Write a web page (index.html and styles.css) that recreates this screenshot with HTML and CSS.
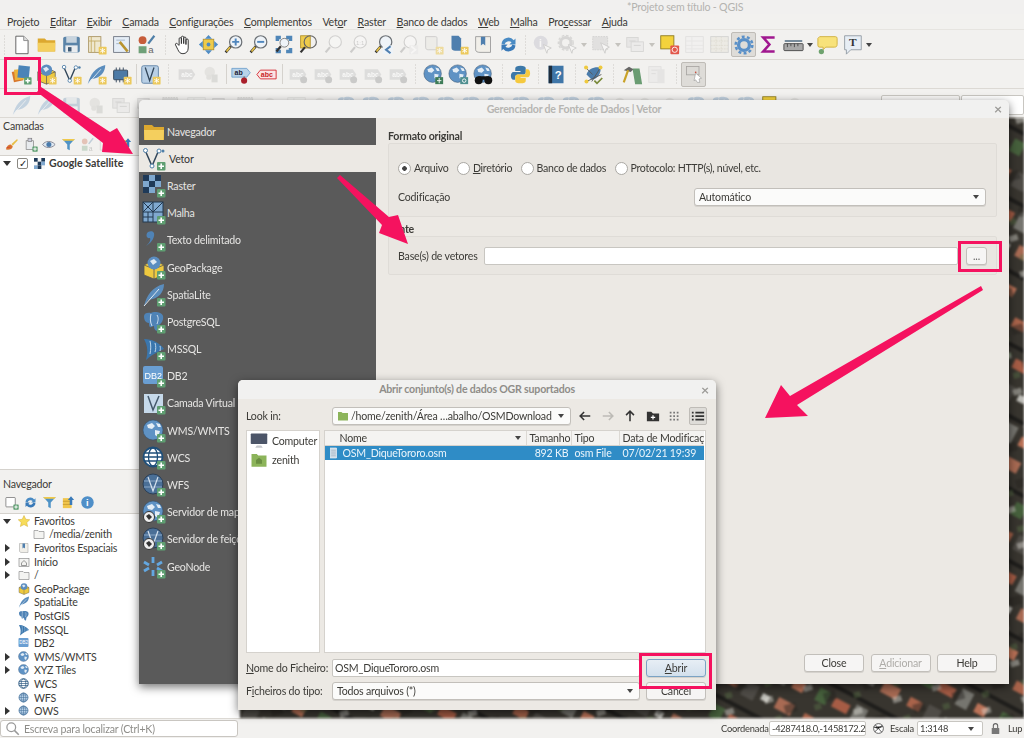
FILE: index.html
```html
<!DOCTYPE html>
<html lang="pt">
<head>
<meta charset="utf-8">
<title>*Projeto sem título - QGIS</title>
<link rel="stylesheet" href="styles.css">
</head>
<body>
<svg class="sprite" xmlns="http://www.w3.org/2000/svg">
  <symbol id="bp" viewBox="0 0 24 24"><rect x="15" y="15" width="8.5" height="8.5" rx="1" fill="#5f9f72"/><path d="M19.2 16.5v5.5M16.5 19.2h5.5" stroke="#fff" stroke-width="1.6"/></symbol>
  <symbol id="by" viewBox="0 0 24 24"><rect x="14.5" y="14.5" width="9" height="9" rx="1" fill="#ecc95c"/><path d="M19 16v6M16.3 17.5l5.4 3M21.7 17.5l-5.4 3" stroke="#fff" stroke-width="1"/></symbol>
  <symbol id="mag" viewBox="0 0 24 24"><path d="M9 14L3 21" stroke="#333" stroke-width="3"/><path d="M8 15L4 20" stroke="#e3bf45" stroke-width="2"/><circle cx="14.5" cy="9" r="7" fill="#eef3f8" stroke="#6b7075" stroke-width="1.4"/></symbol>
  <symbol id="new" viewBox="0 0 24 24"><path d="M5.5 2.5h9l5 5v15h-14z" fill="#fff" stroke="#555"/><path d="M14.5 2.5v5h5" fill="#ddd" stroke="#888"/></symbol>
  <symbol id="open" viewBox="0 0 24 24"><path d="M2 5h8l2 2h10v13H2z" fill="#dca82f"/><path d="M2 10h20l-.5 10h-19z" fill="#f4cf5e"/></symbol>
  <symbol id="save" viewBox="0 0 24 24"><rect x="2.500" y="3" width="19" height="18" rx="2" fill="#5b84a8"/><rect x="6" y="3" width="12" height="7" fill="#c8d4de"/><rect x="5" y="13" width="14" height="8" fill="#e9ecef"/><rect x="8" y="15" width="4" height="5" fill="#3f5a74"/></symbol>
  <symbol id="lay" viewBox="0 0 24 24"><rect x="3" y="3" width="14" height="18" fill="#efe8cf" stroke="#a99463"/><path d="M6 3v18M3 8h14M10 8v13" stroke="#c5ab63"/><use href="#by"/></symbol>
  <symbol id="mgr" viewBox="0 0 24 24"><rect x="3" y="3" width="18" height="18" fill="#e5edf6" stroke="#6d7480"/><path d="M6 7h10M6 11h7" stroke="#9fb1c4"/><path d="M10 9l9 11" stroke="#b8932e" stroke-width="3"/></symbol>
  <symbol id="sty" viewBox="0 0 24 24"><circle cx="7.500" cy="7" r="4.500" fill="#c65c3a"/><rect x="3" y="14" width="9" height="8" fill="#6fa078"/><path d="M14 11L21 2" stroke="#4f7fa8" stroke-width="2.500"/><text x="14" y="22" class="svgt" font-size="11" fill="#666">a</text></symbol>
  <symbol id="hand" viewBox="0 0 24 24"><path d="M7 13V5.500a1.300 1.300 0 0 1 2.600 0V11V3.800a1.300 1.300 0 0 1 2.600 0V11V4.800a1.300 1.300 0 0 1 2.600 0V12V7a1.300 1.300 0 0 1 2.600 0v9c0 4-2.500 6.500-6 6.500-3.500 0-4.600-2-6-5l-2.500-5c-.7-1.500 1-2.500 2-1.300z" fill="#fff" stroke="#333" stroke-width="1.100"/></symbol>
  <symbol id="pan" viewBox="0 0 24 24"><rect x="6" y="6" width="12" height="12" fill="#eecb4a" stroke="#b1922e"/><path d="M12 1l4 4.500H8zM12 23l4-4.500H8zM1 12l4.500-4v8zM23 12l-4.500-4v8z" fill="#4f8cc4"/><circle cx="12" cy="12" r="2.200" fill="#4f8cc4"/></symbol>
  <symbol id="zin" viewBox="0 0 24 24"><use href="#mag"/><path d="M14.500 5v8M10.500 9h8" stroke="#4f86bd" stroke-width="2.200"/></symbol>
  <symbol id="zout" viewBox="0 0 24 24"><use href="#mag"/><path d="M10.500 9h8" stroke="#4f86bd" stroke-width="2.200"/></symbol>
  <symbol id="zfull" viewBox="0 0 24 24"><path d="M3 2h6v4H7v2H3zM15 2h7v6h-4V6h-3zM3 16h4v2h2v4H3zM18 16h4v6h-7v-4h3z" fill="#4f86b8"/><path d="M9 14L4 20" stroke="#333" stroke-width="2.500"/><circle cx="13" cy="10" r="5" fill="#eef3f8" stroke="#777"/></symbol>
  <symbol id="zlay" viewBox="0 0 24 24"><rect x="3" y="2" width="11" height="14" fill="#eecb4a" stroke="#b1922e"/><path d="M8 15L3 21" stroke="#333" stroke-width="2.500"/><circle cx="14" cy="9" r="7" fill="none" stroke="#666" stroke-width="1.300"/></symbol>
  <symbol id="zgen" viewBox="0 0 24 24"><path d="M8 15L3 21" stroke="#777" stroke-width="2.500"/><circle cx="14" cy="9" r="7" fill="#fff" stroke="#888" stroke-width="1.300"/></symbol>
  <symbol id="z11" viewBox="0 0 24 24"><use href="#zgen"/><text x="9" y="12" class="svgt" font-size="7" fill="#777">1:1</text></symbol>
  <symbol id="zlast" viewBox="0 0 24 24"><use href="#mag"/><rect x="11" y="13" width="12" height="10" fill="#eef3f8"/><path d="M20 14l-5 4 5 4" fill="none" stroke="#4f7fb0" stroke-width="2.500"/></symbol>
  <symbol id="znext" viewBox="0 0 24 24"><use href="#zgen"/><rect x="13" y="13" width="10" height="10" fill="#ddd"/><path d="M15 14l5 4-5 4" fill="none" stroke="#fff" stroke-width="2"/></symbol>
  <symbol id="bknew" viewBox="0 0 24 24"><path d="M3 3h11c2 0 2 1 2 2v13H6c-2 0-3-1-3-3z" fill="#e9e7e2" stroke="#aaa"/><use href="#by"/></symbol>
  <symbol id="bkblue" viewBox="0 0 24 24"><path d="M4 2h8l3 3v14H8c-2 0-4-1-4-3z" fill="#4f7fae"/><use href="#by"/></symbol>
  <symbol id="bkview" viewBox="0 0 24 24"><path d="M3 3h17v18H8c-3 0-5-1-5-3z" fill="#f1efe9" stroke="#999"/><path d="M9 3h5v10l-2.500-2-2.500 2z" fill="#4f7fae"/></symbol>
  <symbol id="ref" viewBox="0 0 24 24"><path d="M4 11a8 8 0 0 1 14-4l2-2v7h-7l2.500-2.500A5 5 0 0 0 7.500 12z" fill="#4a8bc4"/><path d="M20 13a8 8 0 0 1-14 4l-2 2v-7h7l-2.500 2.500a5 5 0 0 0 8-2.500z" fill="#3a7ab8"/></symbol>
  <symbol id="ident" viewBox="0 0 24 24"><circle cx="10" cy="10" r="8" fill="#aab"/><text x="8" y="15" class="svgt" font-size="12" font-weight="700" fill="#fff">i</text><path d="M13 12l9 4-4 2-1 4z" fill="#fff" stroke="#777"/></symbol>
  <symbol id="gear" viewBox="0 0 24 24"><circle cx="10" cy="10" r="6" fill="none" stroke="#999" stroke-width="3.500"/><circle cx="10" cy="10" r="8.500" fill="none" stroke="#999" stroke-width="1.500" stroke-dasharray="3 2"/><path d="M13 12l9 4-4 2-1 4z" fill="#fff" stroke="#777"/></symbol>
  <symbol id="sel" viewBox="0 0 24 24"><rect x="2" y="3" width="17" height="15" fill="#bbb" stroke="#888" stroke-dasharray="2 1"/><path d="M11 10l10 5-4 2-1 5z" fill="#fff" stroke="#777"/></symbol>
  <symbol id="attr" viewBox="0 0 24 24"><rect x="2" y="4" width="13" height="11" fill="#ccc" stroke="#999"/><rect x="7" y="9" width="14" height="11" fill="#ddd" stroke="#999"/><path d="M5 8h7M10 13h8" stroke="#888"/></symbol>
  <symbol id="dsel" viewBox="0 0 24 24"><rect x="2" y="2" width="15" height="15" fill="#f3d23c" stroke="#8d7a1f"/><rect x="13" y="13" width="10" height="10" rx="1" fill="#e2574a"/><circle cx="18" cy="18" r="3" fill="none" stroke="#fff"/></symbol>
  <symbol id="tab" viewBox="0 0 24 24"><rect x="2" y="3" width="20" height="18" fill="#eee" stroke="#bbb"/><path d="M2 8h20M2 13h20M2 17h20M9 3v18" stroke="#ccc"/></symbol>
  <symbol id="cal" viewBox="0 0 24 24"><rect x="2" y="3" width="20" height="18" fill="#e7e4db" stroke="#bbb"/><path d="M2 8h20M2 13h20M2 17h20M8 3v18M14 3v18" stroke="#cfc9b9" stroke-dasharray="2 1"/></symbol>
  <symbol id="cog" viewBox="0 0 24 24"><circle cx="12" cy="12" r="6.500" fill="none" stroke="#5a90c8" stroke-width="4"/><circle cx="12" cy="12" r="10" fill="none" stroke="#5a90c8" stroke-width="3" stroke-dasharray="3.500 2.800"/></symbol>
  <symbol id="sig" viewBox="0 0 24 24"><path d="M19 4H6l7 8-7 8h13" fill="none" stroke="#a0178f" stroke-width="3"/></symbol>
  <symbol id="rul" viewBox="0 0 24 24"><path d="M2 8h20" stroke="#36566e" stroke-width="1.500"/><rect x="1" y="11" width="22" height="8" rx="1" fill="#a9a9a9" stroke="#444"/><path d="M5 11v4M9 11v3M13 11v4M17 11v3" stroke="#444"/></symbol>
  <symbol id="tip" viewBox="0 0 24 24"><path d="M3 3h18a2 2 0 0 1 2 2v7c0 2-1 3-3 3H10l-3 3V15H3a2 2 0 0 1-2-2V5z" fill="#f8e27a" stroke="#cfae3a"/><circle cx="5" cy="20" r="3" fill="#6ea26e"/></symbol>
  <symbol id="ttxt" viewBox="0 0 24 24"><path d="M3 2h19v16H10l-5 5v-5H3z" fill="#e7eef5" stroke="#8f98a0"/><text x="8" y="14" class="svgs" font-size="13" fill="#333">T</text></symbol>
  <symbol id="dsm" viewBox="0 0 24 24"><rect x="2" y="8" width="11" height="12" fill="#d8772c" transform="rotate(-12 7 14)"/><rect x="4" y="6" width="12" height="12" fill="#edb33a" transform="rotate(-6 10 12)"/><rect x="8" y="2" width="13" height="14" fill="#4b84b8" transform="rotate(6 14 9)"/><use href="#bp"/></symbol>
  <symbol id="gpkg" viewBox="0 0 24 24"><path d="M2 9l10-5 10 5v10l-10 4-10-4z" fill="#eec93f" stroke="#555" stroke-width=".8"/><path d="M2 9l10 4 10-4M12 13v10" fill="none" stroke="#555" stroke-width=".8"/><circle cx="12" cy="7" r="6.500" fill="#5b8dc0"/><path d="M8 5l4-2 3 3-4 3z" fill="#dfe9f2"/></symbol>
  <symbol id="gpkgp" viewBox="0 0 24 24"><use href="#gpkg"/><use href="#bp"/></symbol>
  <symbol id="gpkgy" viewBox="0 0 24 24"><use href="#gpkg"/><use href="#by"/></symbol>
  <symbol id="vec" viewBox="0 0 24 24"><path d="M3 3l7 16 6-14" fill="none" stroke="#33475a" stroke-width="1.500"/><circle cx="3.500" cy="3.500" r="2" fill="#fff" stroke="#4f7fa8"/><circle cx="10" cy="19" r="2" fill="#fff" stroke="#4f7fa8"/><circle cx="17" cy="4" r="2" fill="#fff" stroke="#4f7fa8"/><circle cx="21" cy="4" r="1.500" fill="#4f7fa8"/></symbol>
  <symbol id="vecp" viewBox="0 0 24 24"><use href="#vec"/><use href="#bp"/></symbol>
  <symbol id="vecy" viewBox="0 0 24 24"><use href="#vec"/><use href="#by"/></symbol>
  <symbol id="fea" viewBox="0 0 24 24"><path d="M2 23C5 12 10 4 22 1c0 8-5 15-16 16z" fill="#5b8dbd"/><path d="M2 23L17 6" stroke="#dfe9f2"/></symbol>
  <symbol id="feap" viewBox="0 0 24 24"><use href="#fea"/><use href="#bp"/></symbol>
  <symbol id="feay" viewBox="0 0 24 24"><use href="#fea"/><use href="#by"/></symbol>
  <symbol id="chip" viewBox="0 0 24 24"><rect x="3" y="7" width="16" height="11" rx="1" fill="#4c7aa6" stroke="#2c3f54"/><path d="M6 4v3M10 4v3M14 4v3M6 18v3M10 18v3M14 18v3" stroke="#2c3f54"/><use href="#by"/></symbol>
  <symbol id="vbox" viewBox="0 0 24 24"><rect x="2" y="2" width="19" height="20" rx="2" fill="#b9d0e6" stroke="#5a7fa3"/><path d="M6 4l5 15 5-15" fill="none" stroke="#33475a" stroke-width="1.500"/><use href="#by"/></symbol>
  <symbol id="vboxp" viewBox="0 0 24 24"><path d="M2 3h19v19H2z" fill="#c6d9ea"/><path d="M6 5l5 14 6-14" fill="none" stroke="#44586b" stroke-width="1.500"/><use href="#bp"/></symbol>
  <symbol id="abc" viewBox="0 0 24 24"><path d="M3 6h15l4 6-4 6H3z" fill="#ccc"/><text x="6" y="14.500" class="svgt" font-size="7.500" font-weight="700" fill="#fff">abc</text></symbol>
  <symbol id="abcg" viewBox="0 0 24 24"><use href="#abc"/><circle cx="19" cy="18" r="4" fill="#aaa"/></symbol>
  <symbol id="abcb" viewBox="0 0 24 24"><path d="M1 5h17l4 5-4 5H1z" fill="#b9d3ea" stroke="#6fa0cb"/><text x="4" y="13" class="svgt" font-size="8" font-weight="700" fill="#223">ab</text><path d="M15 14v4" stroke="#666"/><circle cx="15" cy="19" r="3.500" fill="#a91f2b"/></symbol>
  <symbol id="abcr" viewBox="0 0 24 24"><path d="M1 12l4-5h18v10H5z" fill="#fbe4e4" stroke="#d4232b"/><text x="5.500" y="15" class="svgt" font-size="8" font-weight="700" fill="#c81e24">abc</text></symbol>
  <symbol id="tri" viewBox="0 0 24 24"><circle cx="10" cy="9" r="6" fill="#c5c5c0"/><rect x="12" y="12" width="7" height="9" fill="#a9a9a4"/><circle cx="9" cy="15" r="3" fill="#bcbcb6"/></symbol>
  <symbol id="glob" viewBox="0 0 24 24"><circle cx="11" cy="11" r="10" fill="#5f92c4" stroke="#35536f" stroke-width=".6"/><path d="M5 6l5-2 3 3-3 3-4-1zM13 11l5 1-2 6-3-2zM14 4l4 1 1 3-3 0z" fill="#e4edf5"/></symbol>
  <symbol id="globg" viewBox="0 0 24 24"><circle cx="11" cy="11" r="9" fill="#b6d0e8" stroke="#3d6b95" stroke-width="1.500"/><path d="M2 11h18M11 2v18M4 6h14M4 16h14" stroke="#3d6b95" fill="none"/><ellipse cx="11" cy="11" rx="4.500" ry="9" fill="none" stroke="#3d6b95"/></symbol>
  <symbol id="globgd" viewBox="0 0 24 24"><circle cx="11" cy="11" r="9.500" fill="#fff" stroke="#1f4f7a" stroke-width="1.800"/><path d="M2 11h18M2 7h18M2 15h18" stroke="#1f4f7a" stroke-width="1.300"/><ellipse cx="11" cy="11" rx="4.500" ry="9" fill="none" stroke="#1f4f7a" stroke-width="1.300"/></symbol>
  <symbol id="globwf" viewBox="0 0 24 24"><circle cx="11" cy="11" r="10" fill="#4a6f97" stroke="#2c4058"/><path d="M2 8h18M2 14h18" stroke="#8aa8c6"/><path d="M6 4l5 14 5-14" fill="none" stroke="#d6e2ee" stroke-width="1.200"/></symbol>
  <symbol id="geop" viewBox="0 0 24 24"><use href="#glob"/><use href="#bp"/></symbol>
  <symbol id="gdp" viewBox="0 0 24 24"><use href="#globgd"/><use href="#bp"/></symbol>
  <symbol id="gwp" viewBox="0 0 24 24"><use href="#globwf"/><use href="#bp"/></symbol>
  <symbol id="servm" viewBox="0 0 24 24"><use href="#glob"/><circle cx="7" cy="17" r="5.500" fill="#eee" stroke="#333"/><path d="M4 16l3-2 3 3-3 3z" fill="#333"/><use href="#bp"/></symbol>
  <symbol id="servf" viewBox="0 0 24 24"><use href="#globwf"/><circle cx="7" cy="17" r="5.500" fill="#eee" stroke="#333"/><path d="M4 16l3-2 3 3-3 3z" fill="#333"/><use href="#bp"/></symbol>
  <symbol id="globsave" viewBox="0 0 24 24"><use href="#glob"/><rect x="14" y="15" width="9" height="8" fill="#3e7c57"/><path d="M18.500 16v6M16 19h5" stroke="#fff"/></symbol>
  <symbol id="globfind" viewBox="0 0 24 24"><use href="#glob"/><rect x="14" y="15" width="9" height="8" fill="#4f8f8f"/><circle cx="18.500" cy="19" r="2" fill="none" stroke="#fff"/></symbol>
  <symbol id="globbin" viewBox="0 0 24 24"><use href="#glob"/><circle cx="6.500" cy="18.500" r="4.500" fill="#111"/><circle cx="17.500" cy="18.500" r="4.500" fill="#111"/><rect x="6" y="14" width="12" height="4" fill="#111"/></symbol>
  <symbol id="py" viewBox="0 0 24 24"><path d="M12 2c-4 0-6 1-6 3v3h6v1H4c-2 0-3 2-3 4.500S2 18 4 18h2v-3c0-2 1-3 3-3h6c1.500 0 3-1 3-3V5c0-2-2-3-6-3z" fill="#3c78a8"/><path d="M12 22c4 0 6-1 6-3v-3h-6v-1h8c2 0 3-2 3-4.500S22 6 20 6h-2v3c0 2-1 3-3 3H9c-1.500 0-3 1-3 3v4c0 2 2 3 6 3z" fill="#f5c93e"/></symbol>
  <symbol id="book" viewBox="0 0 24 24"><rect x="3" y="2" width="17" height="20" fill="#3f76a8"/><rect x="3" y="2" width="4" height="20" fill="#1d2d3d"/><text x="10" y="17" class="svgt" font-size="13" font-weight="700" fill="#fff">?</text></symbol>
  <symbol id="node" viewBox="0 0 24 24"><path d="M4 12C6 5 13 3 20 4c1 6-3 13-10 14z" fill="#4b7cab"/><path d="M3 4l8 8M20 4L10 20M4 20l17-8" stroke="#555"/><circle cx="3.500" cy="4" r="2.300" fill="#eec93f"/><circle cx="20" cy="4" r="2.300" fill="#eec93f"/><circle cx="4" cy="20" r="2.300" fill="#eec93f"/><path d="M13 19l3 3 6-6" fill="none" stroke="#7a8a3a" stroke-width="2"/></symbol>
  <symbol id="hamm" viewBox="0 0 24 24"><path d="M12 5l8 0 3 18h-8z" fill="#6a9c72"/><path d="M2 7l6-4 5 3-3 3" fill="#666"/><path d="M7 7L2 21" stroke="#c9a227" stroke-width="2.500"/></symbol>
  <symbol id="plan" viewBox="0 0 24 24"><rect x="2" y="3" width="14" height="18" fill="#ddd" stroke="#bbb"/><rect x="12" y="6" width="8" height="16" fill="#c8c8c8"/><path d="M5 7h7M5 11h5" stroke="#aaa"/></symbol>
  <symbol id="cur" viewBox="0 0 24 24"><rect x="3" y="3" width="15" height="10" fill="#dcdad6" stroke="#a7a5a1"/><circle cx="14" cy="10" r="1" fill="#c43"/><path d="M14 11l7 6-3 1 1 4-3 0-2-3-2 1z" fill="#fff" stroke="#888" stroke-width=".6"/></symbol>
  <symbol id="rast" viewBox="0 0 24 24"><rect x="1" y="1" width="6" height="6" fill="#1f3a58"/><rect x="7" y="1" width="6" height="6" fill="#7fa8cf"/><rect x="13" y="1" width="6" height="6" fill="#1f3a58"/><rect x="1" y="7" width="6" height="6" fill="#7fa8cf"/><rect x="7" y="7" width="6" height="6" fill="#1f3a58"/><rect x="13" y="7" width="6" height="6" fill="#7fa8cf"/><rect x="1" y="13" width="6" height="6" fill="#1f3a58"/><rect x="7" y="13" width="6" height="6" fill="#7fa8cf"/><use href="#bp"/></symbol>
  <symbol id="mesh" viewBox="0 0 24 24"><rect x="1" y="1" width="20" height="20" fill="#7fa8cf" stroke="#22384f"/><path d="M1 11h20M11 1v20M1 1l10 10M1 11L11 1M11 11l10-10M1 16h10M6 11v10" stroke="#22384f" fill="none"/><use href="#bp"/></symbol>
  <symbol id="txt" viewBox="0 0 24 24"><path d="M6 4c4-2 7 0 6 4-1 5-5 8-8 10 3-3 5-5 4-8-3 1-5-3-2-6z" fill="#4f83b6"/><use href="#bp"/></symbol>
  <symbol id="pg" viewBox="0 0 24 24"><path d="M2 6c0-3 4-4 7-3 3-2 11-1 12 3 1 4-2 8-4 9l-1 6c-2 0-4-1-4-5-3 1-5 3-5-3-4 0-5-4-5-7z" fill="#4f83b6"/><path d="M9 4c-1 4-1 8 1 12M15 5c2 3 1 6 0 9" stroke="#cfdfee" fill="none"/></symbol>
  <symbol id="pgp" viewBox="0 0 24 24"><use href="#pg"/><use href="#bp"/></symbol>
  <symbol id="ms" viewBox="0 0 24 24"><path d="M2 2c8 0 16 4 20 10-4 2-10 4-18 11 2-7 2-14-2-21z" fill="#3a76ad"/><path d="M8 4c1 4 1 8 0 13M13 6c1 3 1 6 0 9M18 9c.5 2 .5 3 0 5" stroke="#bcd4e8" fill="none"/></symbol>
  <symbol id="msp" viewBox="0 0 24 24"><use href="#ms"/><use href="#bp"/></symbol>
  <symbol id="db2" viewBox="0 0 24 24"><rect x="1" y="2" width="20" height="18" rx="2" fill="#6a9ed2"/><text x="2.500" y="14.500" class="svgt" font-size="9" fill="#fff">DB2</text></symbol>
  <symbol id="db2p" viewBox="0 0 24 24"><use href="#db2"/><use href="#bp"/></symbol>
  <symbol id="geon" viewBox="0 0 24 24"><path d="M11 2v6M11 15v6M2 7l5 3M15 13l5 3M2 16l5-3M15 10l5-3" stroke="#63a7e0" stroke-width="2.800"/><use href="#bp"/></symbol>
  <symbol id="goog" viewBox="0 0 12 12"><rect width="12" height="12" fill="#f8f8f8"/><rect x="0" y="0" width="4" height="4" fill="#1f3a58"/><rect x="8" y="0" width="4" height="4" fill="#1f3a58"/><rect x="4" y="4" width="4" height="4" fill="#1f3a58"/><rect x="0" y="8" width="4" height="4" fill="#7fa8cf"/><rect x="8" y="4" width="4" height="4" fill="#7fa8cf"/><rect x="4" y="8" width="4" height="4" fill="#1f3a58"/></symbol>
  <symbol id="star" viewBox="0 0 24 24"><path d="M12 1l3.500 7.500 8 1-6 5.500 1.700 8L12 19l-7.200 4 1.700-8-6-5.500 8-1z" fill="#f7dc5a" stroke="#d0ad34"/></symbol>
  <symbol id="fold" viewBox="0 0 24 24"><path d="M2 5h8l2 2h10v14H2z" fill="#f4f4f2" stroke="#888" stroke-width="1.300"/></symbol>
  <symbol id="home" viewBox="0 0 24 24"><rect x="2" y="5" width="20" height="16" fill="#f4f4f2" stroke="#888" stroke-width="1.300"/><path d="M7 14l5-5 5 5v5H7z" fill="none" stroke="#666" stroke-width="1.300"/></symbol>
  <symbol id="filt" viewBox="0 0 24 24"><path d="M2 3h20l-8 9v9l-4-2v-7z" fill="#4f93c6"/><path d="M2 3h20l-2 3H4z" fill="#f0c94a"/></symbol>
  <symbol id="brush" viewBox="0 0 24 24"><path d="M3 20c1-5 4-8 8-8l3 3c-1 4-5 6-11 5z" fill="#d9752f"/><path d="M12 11l9-8 1 2-8 9z" fill="#e8bf45"/><path d="M4 17l6-1" stroke="#c33"/></symbol>
  <symbol id="addgr" viewBox="0 0 24 24"><rect x="5" y="6" width="12" height="14" fill="#e8ebee" stroke="#777"/><rect x="8" y="2" width="6" height="5" fill="#ccd" stroke="#777"/><use href="#bp"/></symbol>
  <symbol id="eye" viewBox="0 0 24 24"><path d="M1 12c4-6 14-7 20 0-6 7-16 6-20 0z" fill="#dfe9f2" stroke="#556"/><circle cx="11" cy="12" r="4" fill="#4a7aaa"/></symbol>
  <symbol id="expa" viewBox="0 0 24 24"><rect x="3" y="5" width="14" height="16" fill="#f1c64d"/><path d="M3 10h14M3 15h14" stroke="#b58a22"/><path d="M16 2l5 6h-3v8h-4V8h-3z" fill="#3a7ab8"/></symbol>
  <symbol id="nwl" viewBox="0 0 24 24"><rect x="3" y="4" width="15" height="15" rx="1" fill="#fff" stroke="#555"/><use href="#bp"/></symbol>
  <symbol id="info" viewBox="0 0 24 24"><circle cx="12" cy="12" r="10" fill="#4f8fc8"/><text x="9.500" y="18" class="svgt" font-size="15" font-weight="700" fill="#fff">i</text></symbol>
  <symbol id="doc" viewBox="0 0 24 24"><rect x="5" y="1" width="14" height="22" fill="#cfdbe6" stroke="#fff"/><path d="M7 6h10M7 10h10M7 14h10M7 18h10" stroke="#8aa0b4"/></symbol>
  <symbol id="comp" viewBox="0 0 24 24"><rect x="1" y="2" width="22" height="14" rx="1" fill="#4c5568"/><path d="M9 18h6l2 3H7z" fill="#c5c7cc"/></symbol>
  <symbol id="hfold" viewBox="0 0 24 24"><path d="M2 4h7l2 2h11v15H2z" fill="#8cb45a"/><path d="M8 17v-5l4-3 4 3v5z" fill="#6a8f42"/></symbol>
  <symbol id="hf2" viewBox="0 0 24 24"><path d="M2 4h7l2 2h11v15H2z" fill="#8cb45a"/></symbol>
  <symbol id="mg" viewBox="0 0 24 24"><circle cx="10" cy="10" r="7" fill="none" stroke="#999" stroke-width="2"/><path d="M15 15l7 7" stroke="#999" stroke-width="2.500"/></symbol>
  <symbol id="lock" viewBox="0 0 24 24"><path d="M8 11V7a4 4 0 0 1 8 0v4" fill="none" stroke="#666" stroke-width="2"/><rect x="5" y="11" width="14" height="11" rx="1" fill="#777"/></symbol>
  <symbol id="crs" viewBox="0 0 24 24"><circle cx="12" cy="12" r="9" fill="#fff" stroke="#444" stroke-width="1.500"/><path d="M3 9l8 3 9-4M5 18l14-12M6 5l12 14" stroke="#444" stroke-width="1.500"/></symbol>
  <symbol id="nl" viewBox="0 0 16 16"><path d="M14 8H3M7 3.500L2.500 8 7 12.500" fill="none" stroke="#333" stroke-width="1.800"/></symbol>
  <symbol id="nr" viewBox="0 0 16 16"><path d="M2 8h11M9 3.500L13.500 8 9 12.500" fill="none" stroke="#bdbbb6" stroke-width="1.800"/></symbol>
  <symbol id="nu" viewBox="0 0 16 16"><path d="M8 14V3M3.500 7L8 2.500 12.500 7" fill="none" stroke="#333" stroke-width="1.800"/></symbol>
  <symbol id="nf" viewBox="0 0 16 16"><path d="M1 3h5l2 2h7v9H1z" fill="#333"/><path d="M8 7v5M5.500 9.500h5" stroke="#fff" stroke-width="1.400"/></symbol>
  <symbol id="ng" viewBox="0 0 16 16"><path d="M2 3h2v2H2zM6 3h2v2H6zM10 3h2v2h-2zM2 7h2v2H2zM6 7h2v2H6zM10 7h2v2h-2zM2 11h2v2H2zM6 11h2v2H6zM10 11h2v2h-2z" fill="#777"/></symbol>
  <symbol id="nd" viewBox="0 0 16 16"><path d="M1 3h2v2H1zM5 3h10v2H5zM1 7h2v2H1zM5 7h10v2H5zM1 11h2v2H1zM5 11h10v2H5z" fill="#333"/></symbol>
</svg>

<div class="app">
  <header class="titlebar">*Projeto sem título - QGIS</header>
  <nav class="menubar">
    <span class="mi">Projeto</span><span class="mi"><u>E</u>ditar</span><span class="mi"><u>E</u>xibir</span><span class="mi"><u>C</u>amada</span><span class="mi"><u>C</u>onfigurações</span><span class="mi"><u>C</u>omplementos</span><span class="mi">Vet<u>o</u>r</span><span class="mi"><u>R</u>aster</span><span class="mi"><u>B</u>anco de dados</span><span class="mi"><u>W</u>eb</span><span class="mi"><u>M</u>alha</span><span class="mi">Pro<u>c</u>essar</span><span class="mi"><u>A</u>juda</span>
  </nav>

  <div class="tb tb1">
    <i class="g w9"></i>
    <svg class="ic"><use href="#new"/></svg><svg class="ic"><use href="#open"/></svg><svg class="ic"><use href="#save"/></svg><svg class="ic"><use href="#lay"/></svg><svg class="ic"><use href="#mgr"/></svg><svg class="ic"><use href="#sty"/></svg>
    <i class="g w12"></i>
    <svg class="ic"><use href="#hand"/></svg><svg class="ic"><use href="#pan"/></svg><svg class="ic"><use href="#zin"/></svg><svg class="ic"><use href="#zout"/></svg><svg class="ic"><use href="#zfull"/></svg><svg class="ic"><use href="#zlay"/></svg><svg class="ic off"><use href="#zgen"/></svg><svg class="ic off"><use href="#z11"/></svg><svg class="ic"><use href="#zlast"/></svg><svg class="ic off"><use href="#znext"/></svg><svg class="ic off2"><use href="#bknew"/></svg><svg class="ic"><use href="#bkblue"/></svg><svg class="ic"><use href="#bkview"/></svg><svg class="ic"><use href="#ref"/></svg>
    <i class="g w9"></i>
    <svg class="ic off"><use href="#ident"/></svg><svg class="ic off"><use href="#gear"/></svg><b class="dd lite"></b><svg class="ic off"><use href="#sel"/></svg><b class="dd lite"></b><svg class="ic off"><use href="#attr"/></svg><b class="dd lite"></b><svg class="ic"><use href="#dsel"/></svg><svg class="ic off"><use href="#tab"/></svg><svg class="ic off2"><use href="#cal"/></svg>
    <span class="act"><svg class="ic"><use href="#cog"/></svg></span>
    <svg class="ic"><use href="#sig"/></svg><svg class="ic"><use href="#rul"/></svg><b class="dd"></b><svg class="ic"><use href="#tip"/></svg><svg class="ic"><use href="#ttxt"/></svg><b class="dd"></b>
  </div>

  <div class="tb tb2">
    <i class="g w9"></i>
    <svg class="ic"><use href="#dsm"/></svg><svg class="ic"><use href="#gpkgy"/></svg><svg class="ic"><use href="#vecy"/></svg><svg class="ic"><use href="#feay"/></svg><svg class="ic"><use href="#chip"/></svg>
    <i class="sep w4"></i>
    <svg class="ic"><use href="#vbox"/></svg>
    <i class="g w11"></i>
    <svg class="ic off2"><use href="#abc"/></svg><svg class="ic off"><use href="#tri"/></svg>
    <i class="sep w5"></i>
    <svg class="ic"><use href="#abcb"/></svg><svg class="ic"><use href="#abcr"/></svg>
    <i class="sep w6"></i>
    <svg class="ic off2"><use href="#abcg"/></svg><svg class="ic off2"><use href="#abcg"/></svg><svg class="ic off2"><use href="#abcg"/></svg><svg class="ic off2"><use href="#abcg"/></svg><svg class="ic off2"><use href="#abcg"/></svg>
    <i class="g w11"></i>
    <svg class="ic"><use href="#globsave"/></svg><svg class="ic"><use href="#globfind"/></svg><svg class="ic"><use href="#globbin"/></svg>
    <i class="g w12"></i>
    <svg class="ic"><use href="#py"/></svg>
    <i class="g w11"></i>
    <svg class="ic"><use href="#book"/></svg>
    <i class="g w12"></i>
    <svg class="ic"><use href="#node"/></svg>
    <i class="g w14"></i>
    <svg class="ic"><use href="#hamm"/></svg><svg class="ic off"><use href="#plan"/></svg>
    <i class="g w12"></i>
    <span class="act"><svg class="ic"><use href="#cur"/></svg></span>
  </div>

  <div class="tb tb3">
    <svg class="ic off"><use href="#fea"/></svg><svg class="ic off"><use href="#fea"/></svg><svg class="ic off"><use href="#save"/></svg><svg class="ic off"><use href="#tri"/></svg><svg class="ic off"><use href="#attr"/></svg><svg class="ic off"><use href="#attr"/></svg><svg class="ic off"><use href="#sel"/></svg><svg class="ic off"><use href="#tab"/></svg><svg class="ic off"><use href="#attr"/></svg><svg class="ic off"><use href="#sel"/></svg><svg class="ic off"><use href="#tri"/></svg><svg class="ic off"><use href="#tab"/></svg><svg class="ic off"><use href="#tri"/></svg><svg class="ic off"><use href="#pg"/></svg><svg class="ic off"><use href="#pg"/></svg><svg class="ic off"><use href="#pg"/></svg><svg class="ic off"><use href="#pg"/></svg><svg class="ic off"><use href="#pg"/></svg><svg class="ic off"><use href="#pg"/></svg><svg class="ic off"><use href="#pg"/></svg><svg class="ic off"><use href="#pg"/></svg><svg class="ic off"><use href="#pg"/></svg><svg class="ic off"><use href="#pg"/></svg><svg class="ic off"><use href="#pg"/></svg><svg class="ic off"><use href="#tri"/></svg><svg class="ic off"><use href="#tri"/></svg><svg class="ic off"><use href="#tri"/></svg><svg class="ic off"><use href="#pg"/></svg><svg class="ic off"><use href="#pg"/></svg><svg class="ic off"><use href="#pg"/></svg><svg class="ic"><use href="#dsel"/></svg><svg class="ic off"><use href="#tri"/></svg>
    <i class="tb3fill"></i>
    <span class="tb3combo"></span><span class="tb3edit"></span>
  </div>

  <main class="main">
    <aside class="side">
      <section class="dock layers">
        <h2 class="dockhead">Camadas</h2>
        <div class="docktools">
          <svg class="ti"><use href="#brush"/></svg><svg class="ti"><use href="#addgr"/></svg><svg class="ti"><use href="#eye"/></svg><svg class="ti"><use href="#filt"/></svg><svg class="ti off"><use href="#sty"/></svg><svg class="ti off"><use href="#fold"/></svg><svg class="ti"><use href="#expa"/></svg>
        </div>
        <div class="layerlist">
          <div class="layer"><b class="exp open"></b><span class="chk">✓</span><svg class="ri"><use href="#goog"/></svg><strong>Google Satellite</strong></div>
        </div>
      </section>
      <i class="splitter"></i>
      <section class="dock browser">
        <h2 class="dockhead">Navegador</h2>
        <div class="docktools">
          <svg class="ti"><use href="#nwl"/></svg><svg class="ti"><use href="#ref"/></svg><svg class="ti"><use href="#filt"/></svg><svg class="ti"><use href="#expa"/></svg><svg class="ti"><use href="#info"/></svg>
        </div>
        <ul class="tree">
          <li><b class="exp open"></b><svg class="ri"><use href="#star"/></svg>Favoritos</li>
          <li class="sub"><svg class="ri"><use href="#fold"/></svg>/media/zenith</li>
          <li><b class="exp"></b><svg class="ri"><use href="#bkview"/></svg>Favoritos Espaciais</li>
          <li><b class="exp"></b><svg class="ri"><use href="#home"/></svg>Início</li>
          <li><b class="exp"></b><svg class="ri"><use href="#fold"/></svg>/</li>
          <li><b class="exp no"></b><svg class="ri"><use href="#gpkg"/></svg>GeoPackage</li>
          <li><b class="exp no"></b><svg class="ri"><use href="#fea"/></svg>SpatiaLite</li>
          <li><b class="exp no"></b><svg class="ri"><use href="#pg"/></svg>PostGIS</li>
          <li><b class="exp no"></b><svg class="ri"><use href="#ms"/></svg>MSSQL</li>
          <li><b class="exp no"></b><svg class="ri"><use href="#db2"/></svg>DB2</li>
          <li><b class="exp"></b><svg class="ri"><use href="#glob"/></svg>WMS/WMTS</li>
          <li><b class="exp"></b><svg class="ri"><use href="#glob"/></svg>XYZ Tiles</li>
          <li><b class="exp no"></b><svg class="ri"><use href="#globgd"/></svg>WCS</li>
          <li><b class="exp no"></b><svg class="ri"><use href="#globg"/></svg>WFS</li>
          <li><b class="exp"></b><svg class="ri"><use href="#globg"/></svg>OWS</li>
        </ul>
      </section>
    </aside>
    <div class="map">
      <svg class="mapimg" xmlns="http://www.w3.org/2000/svg" width="100%" height="100%">
        <defs>
          <pattern id="city" width="86" height="64" patternUnits="userSpaceOnUse" patternTransform="rotate(28)">
            <rect width="86" height="64" fill="#38352f"/>
            <rect x="0" y="28" width="86" height="4" fill="#1e1d1b"/>
            <rect x="4" y="4" width="14" height="10" fill="#a9634a"/>
            <rect x="24" y="2" width="14" height="16" fill="#4f4c47"/>
            <rect x="44" y="6" width="8" height="7" fill="#bdbcb6"/>
            <rect x="60" y="2" width="18" height="12" fill="#a86a53"/>
            <rect x="6" y="38" width="12" height="14" fill="#46603c"/>
            <rect x="24" y="40" width="17" height="10" fill="#a65c45"/>
            <rect x="46" y="36" width="13" height="18" fill="#76756f"/>
            <rect x="66" y="42" width="12" height="10" fill="#bb7257"/>
          </pattern>
          <pattern id="city2" width="41" height="37" patternUnits="userSpaceOnUse" patternTransform="rotate(-17)">
            <rect x="3" y="5" width="9" height="6" fill="#dfddd6"/>
            <rect x="20" y="18" width="12" height="9" fill="#23211e"/>
            <rect x="8" y="26" width="7" height="6" fill="#5a7048"/>
          </pattern>
        </defs>
        <rect width="100%" height="100%" fill="url(#city)"/>
        <rect class="overlay" width="100%" height="100%" fill="url(#city2)"/>
      </svg>
    </div>
  </main>

  <footer class="status">
    <label class="locator"><svg class="ti"><use href="#mg"/></svg>Escreva para localizar (Ctrl+K)</label>
    <span class="stat coordl">Coordenada</span><span class="statin coord">-4287418.0,-1458172.2</span>
    <span class="slot"><svg class="crs"><use href="#crs"/></svg></span>
    <span class="stat scalel">Escala</span><span class="statin scale">1:3148<b class="dd"></b></span>
    <span class="slot lockslot"><svg class="crs"><use href="#lock"/></svg></span>
    <span class="stat">Lup</span>
  </footer>
</div>

<section class="win dsmwin">
  <div class="wintitle">Gerenciador de Fonte de Dados | Vetor<span class="x">×</span></div>
  <div class="dsmbody">
    <ul class="dsmnav">
      <li><svg class="ni"><use href="#open"/></svg>Navegador</li>
      <li class="on"><svg class="ni"><use href="#vecp"/></svg>Vetor</li>
      <li><svg class="ni"><use href="#rast"/></svg>Raster</li>
      <li><svg class="ni"><use href="#mesh"/></svg>Malha</li>
      <li><svg class="ni"><use href="#txt"/></svg>Texto delimitado</li>
      <li><svg class="ni"><use href="#gpkgp"/></svg>GeoPackage</li>
      <li><svg class="ni"><use href="#feap"/></svg>SpatiaLite</li>
      <li><svg class="ni"><use href="#pgp"/></svg>PostgreSQL</li>
      <li><svg class="ni"><use href="#msp"/></svg>MSSQL</li>
      <li><svg class="ni"><use href="#db2p"/></svg>DB2</li>
      <li><svg class="ni"><use href="#vboxp"/></svg>Camada Virtual</li>
      <li><svg class="ni"><use href="#geop"/></svg>WMS/WMTS</li>
      <li><svg class="ni"><use href="#gdp"/></svg>WCS</li>
      <li><svg class="ni"><use href="#gwp"/></svg>WFS</li>
      <li><svg class="ni"><use href="#servm"/></svg>Servidor de mapas</li>
      <li><svg class="ni"><use href="#servf"/></svg>Servidor de feições</li>
      <li><svg class="ni"><use href="#geon"/></svg>GeoNode</li>
    </ul>
    <div class="dsmmain">
      <h3 class="gt first">Formato original</h3>
      <div class="group g1">
        <div class="radios">
          <span class="radio sel"><span>Arquivo</span></span><span class="radio"><span><u>D</u>iretório</span></span><span class="radio"><span>Banco de dados</span></span><span class="radio"><span>Protocolo: HTTP(s), núvel, etc.</span></span>
        </div>
        <div class="enc"><span>Codificação</span><span class="combo enccombo">Automático<b class="dd"></b></span></div>
      </div>
      <h3 class="gt second">Fonte</h3>
      <div class="group g2">
        <span class="baselabel">Base(s) de vetores</span><span class="input grow"></span><span class="btn dots">...</span>
      </div>
      <div class="actions">
        <span class="btn wide">Close</span><span class="btn wide dis"><span><u>A</u>dicionar</span></span><span class="btn wide">Help</span>
      </div>
    </div>
  </div>
</section>

<section class="win filewin">
  <div class="wintitle">Abrir conjunto(s) de dados OGR suportados<span class="x">×</span></div>
  <div class="filebody">
    <div class="lookrow">
      <span class="looklabel">Look in:</span>
      <span class="combo lookcombo"><svg class="ri"><use href="#hf2"/></svg>/home/zenith/Área …abalho/OSMDownload<b class="dd"></b></span>
      <span class="navs">
        <span class="nb"><svg class="ni16"><use href="#nl"/></svg></span><span class="nb"><svg class="ni16"><use href="#nr"/></svg></span><span class="nb"><svg class="ni16"><use href="#nu"/></svg></span><span class="nb"><svg class="ni16"><use href="#nf"/></svg></span><span class="nb"><svg class="ni16"><use href="#ng"/></svg></span><span class="nb cur"><svg class="ni16"><use href="#nd"/></svg></span>
      </span>
    </div>
    <div class="panes">
      <ul class="places">
        <li><svg class="pi"><use href="#comp"/></svg>Computer</li>
        <li><svg class="pi"><use href="#hfold"/></svg>zenith</li>
      </ul>
      <div class="files">
        <div class="fhead"><span class="fname">Nome<b class="dd sort"></b></span><span>Tamanho</span><span>Tipo</span><span class="fdate">Data de Modificaç</span></div>
        <div class="frow"><span class="fname"><svg class="fi"><use href="#doc"/></svg>OSM_DiqueTororo.osm</span><span class="fsz">892 KB</span><span>osm File</span><span>07/02/21 19:39</span></div>
      </div>
    </div>
    <div class="formgrid">
      <span><u>N</u>ome do Ficheiro:</span><span class="input tx">OSM_DiqueTororo.osm</span><span class="btn def"><span><u>A</u>brir</span></span>
      <span>F<u>i</u>cheiros do tipo:</span><span class="combo">Todos arquivos (*)<b class="dd"></b></span><span class="btn">Cancel</span>
    </div>
  </div>
</section>

<svg class="marks" xmlns="http://www.w3.org/2000/svg" viewBox="0 0 1024 738" width="1024" height="738">
  <g class="pink">
    <path d="M37 92L41 87L110 132L117 128L133 154L102 152L103 143Z"/>
    <path d="M337 178L340 175L389 217L398 215L408 244L379 233L382 225Z"/>
    <path d="M981 286L983 290L797 405L808 416L765 418L781 385L790 396Z"/>
  </g>
  <g class="box">
    <rect x="5.500" y="58.500" width="34" height="35"/>
    <rect x="959.500" y="242.500" width="41" height="28"/>
    <rect x="640.500" y="654.500" width="70" height="33"/>
  </g>
</svg>
</body>
</html>
```

FILE: styles.css
```css
* { box-sizing: border-box; }
html, body { margin: 0; padding: 0; }
body {
  width: 1024px; height: 738px; overflow: hidden; position: relative;
  font-family: Lato, Roboto, sans-serif; font-size: 10.6px; letter-spacing: -.2px; color: #3c3b37;
  background: #f2f1ef;
  filter: blur(.4px);
}
.sprite { display: none; }
.svgt { font-family: "Liberation Sans", sans-serif; letter-spacing: 0; }
.svgs { font-family: "Liberation Serif", serif; font-weight: 700; letter-spacing: 0; }
u { text-decoration: underline; text-underline-offset: 1px; }
ul { list-style: none; margin: 0; padding: 0; }
h2, h3 { margin: 0; font-weight: 400; font-size: inherit; }

.app { display: flex; flex-direction: column; height: 738px; }
.titlebar { height: 14px; line-height: 14px; padding-left: 627px; color: #b4b3b0; background: #f1f0ef; white-space: nowrap; }
.menubar { height: 16px; display: flex; align-items: center; padding-left: 7px; gap: 10.6px; background: #f2f1ef; white-space: nowrap; border-bottom: 1px solid #e6e4e0; }

.tb { display: flex; align-items: center; background: #f2f1ef; border-bottom: 1px solid #dcd9d4; flex: none; }
.tb1 { height: 30px; }
.tb2 { height: 29px; }
.tb3 { height: 29px; padding-left: 9px; align-items: flex-start; padding-top: 6px; }
.ic { width: 21px; height: 21px; margin: 0 2px; flex: none; }
.off { opacity: .3; }
.off2 { opacity: .55; }
.g { flex: none; height: 20px; background: radial-gradient(circle, #c9c7c2 .8px, transparent 1px) center / 3px 3px repeat-y; }
.sep { flex: none; height: 20px; background: linear-gradient(#d5d2cd, #d5d2cd) center / 1px 100% no-repeat; }
.w4 { width: 4px; } .w5 { width: 5px; } .w6 { width: 6px; } .w9 { width: 9px; }
.w11 { width: 11px; } .w12 { width: 12px; } .w14 { width: 14px; }
.dd { display: inline-block; flex: none; width: 9px; height: 0; position: relative; }
.dd::after { content: ""; position: absolute; left: 1px; top: -2px; border: 3.5px solid transparent; border-top: 4px solid #444; border-bottom: 0; }
.dd.lite::after { border-top-color: #c5c3be; }
.act { display: flex; flex: none; background: #dedcd8; border: 1px solid #bfbcb7; border-radius: 2px; margin: 0 0 0 -1px; width: 25px; height: 25px; align-items: center; justify-content: center; }
.act .ic { margin: 0; width: 20px; height: 20px; }
.tb3fill { flex: 1; }
.tb3combo { width: 79px; height: 20px; background: #f7f6f5; border: 1px solid #c8c6c1; border-radius: 2px; margin-right: 1px; }
.tb3edit { width: 63px; height: 20px; background: #fff; border: 1px solid #c8c6c1; border-radius: 2px; }

.main { flex: 1; display: flex; min-height: 0; }
.side { width: 240px; flex: none; display: flex; flex-direction: column; background: #f2f1ef; }
.dock { display: flex; flex-direction: column; min-height: 0; }
.layers { height: 352px; }
.browser { flex: 1; }
.splitter { height: 6px; flex: none; background: #f2f1ef; }
.dockhead { height: 16px; line-height: 16px; padding-left: 3px; }
.docktools { height: 21px; display: flex; align-items: center; padding-left: 4px; gap: 4px; }
.ti { width: 15px; height: 15px; flex: none; }
.layerlist { flex: 1; background: #fff; border-top: 1px solid #d5d2cd; border-bottom: 1px solid #d5d2cd; }
.layer { height: 14px; display: flex; align-items: center; white-space: nowrap; }
.layer strong { font-weight: 700; margin-left: 4px; letter-spacing: 0; }
.exp { flex: none; display: inline-block; width: 18px; height: 8px; position: relative; }
.exp::after { content: ""; position: absolute; left: 5px; top: 0; border: 4px solid transparent; border-left: 5px solid #333; border-right: 0; }
.exp.open::after { left: 3px; top: 2px; border: 4px solid transparent; border-top: 5px solid #333; border-bottom: 0; }
.exp.no::after { display: none; }
.layer .exp { width: 17px; }
.chk { flex: none; width: 11px; height: 11px; margin-right: 6px; border: 1px solid #8a8882; border-radius: 2px; font-size: 10px; line-height: 9px; text-align: center; color: #222; }
.ri { width: 12px; height: 12px; flex: none; }
.layer .ri { width: 11px; height: 11px; }
.tree { flex: 1; background: #fff; border-top: 1px solid #d5d2cd; overflow: hidden; }
.tree li { height: 13.6px; display: flex; align-items: center; white-space: nowrap; }
.tree .ri { margin-right: 4px; }
.tree .sub { padding-left: 33px; }
.map { flex: 1; min-width: 0; }
.mapimg { display: block; filter: blur(.9px); }
.overlay { opacity: .45; }

.status { height: 20px; flex: none; display: flex; align-items: center; background: #f2f1ef; border-top: 1px solid #dcd9d4; white-space: nowrap; font-size: 9.3px; }
.locator { width: 238px; height: 17px; display: flex; align-items: center; gap: 4px; padding-left: 4px; margin-right: 483px; background: #fff; border: 1px solid #c9c6c1; border-radius: 3px; color: #8e8d89; font-size: 10.6px; flex: none; }
.stat { flex: none; }
.coordl { width: 48px; }
.scalel { width: 27px; }
.statin { flex: none; height: 15px; line-height: 13px; background: #fff; border: 1px solid #c8c6c1; border-radius: 2px; padding-left: 2px; }
.coord { width: 97px; letter-spacing: -.3px; }
.scale { width: 66px; display: flex; align-items: center; justify-content: space-between; padding-right: 6px; }
.slot { flex: none; width: 24px; display: flex; justify-content: center; }
.lockslot { width: 25px; }
.crs { width: 13px; height: 13px; flex: none; }

.win { position: absolute; border-radius: 5px 5px 0 0; box-shadow: 0 3px 10px rgba(0,0,0,.55); background: #ece9e4; display: flex; flex-direction: column; overflow: hidden; }
.wintitle { flex: none; position: relative; height: 18px; line-height: 18px; text-align: center; color: #b6b5b2; font-weight: 700; background: #f1f1f0; white-space: nowrap; }
.x { position: absolute; right: 7px; top: 0; font-size: 14px; color: #9c9b98; font-weight: 700; }

.dsmwin { left: 139px; top: 100px; width: 870px; height: 584px; }
.dsmbody { flex: 1; display: flex; min-height: 0; }
.dsmnav { width: 237px; flex: none; background: #5a5a5a; color: #e6e5e3; }
.dsmnav li { height: 27.2px; display: flex; align-items: center; padding-left: 3px; gap: 1px; white-space: nowrap; }
.dsmnav li.on { background: #ece9e4; color: #333; gap: 3px; }
.ni { width: 24px; height: 24px; flex: none; }
.dsmmain { flex: 1; display: flex; flex-direction: column; padding: 11px 12px 12px; }
.gt { font-weight: 700; height: 14px; line-height: 14px; flex: none; }
.second { margin-top: 5px; }
.group { border: 1px solid #dfdcd7; background: #e9e6e1; border-radius: 2px; flex: none; }
.g1 { height: 74px; padding: 16px 10px 0 9px; }
.radios { display: flex; height: 16px; align-items: center; gap: 8.5px; letter-spacing: -.3px; }
.radio { display: flex; align-items: center; gap: 3px; }
.radio::before { content: ""; width: 11px; height: 11px; border-radius: 50%; background: #fff; border: 1px solid #aaa8a3; }
.radio.sel::before { background: radial-gradient(circle, #444 2px, #fff 2.6px); }
.enc { display: flex; justify-content: space-between; align-items: center; margin-top: 12px; height: 18px; }
.combo { display: flex; align-items: center; height: 18px; background: #fbfbfa; border: 1px solid #c2bfba; border-radius: 3px; padding: 0 4px; box-shadow: 0 1px 0 #d5d2cd; white-space: nowrap; }
.combo .dd { margin-left: auto; }
.enccombo { width: 292px; }
.g2 { height: 39px; display: flex; align-items: center; padding: 0 9px; }
.baselabel { width: 86px; flex: none; }
.input { height: 18px; background: #fff; border: 1px solid #c8c6c1; border-radius: 2px; }
.grow { flex: 1; }
.btn { flex: none; display: flex; align-items: center; justify-content: center; height: 18px; background: #f6f5f4; border: 1px solid #c2bfba; border-radius: 3px; box-shadow: 0 1px 0 #d5d2cd; }
.dots { width: 21px; margin-left: 8px; color: #666; }
.actions { margin-top: auto; display: flex; justify-content: flex-end; gap: 6.500px; }
.wide { width: 60px; }
.dis { color: #aeaca8; }

.filewin { left: 238px; top: 380px; width: 478px; height: 330px; }
.filewin .wintitle { height: 19px; line-height: 19px; color: #8f8d89; }
.filebody { flex: 1; display: flex; flex-direction: column; padding: 8px 10px 10px 8px; min-height: 0; }
.lookrow { display: flex; align-items: center; height: 18px; flex: none; }
.looklabel { width: 86px; flex: none; }
.lookcombo { width: 239px; gap: 2px; flex: none; padding-left: 4px; }
.navs { display: flex; align-items: center; margin-left: 3px; }
.nb { width: 22.500px; height: 18px; display: flex; align-items: center; justify-content: center; }
.ni16 { width: 14px; height: 14px; }
.cur { background: #dedcd8; border: 1px solid #bfbcb7; border-radius: 2px; width: 18px; margin-left: 2px; }
.panes { flex: 1; display: flex; gap: 3.500px; margin-top: 5px; min-height: 0; }
.places { width: 74px; flex: none; background: #fff; border: 1px solid #d5d2cd; padding: 0 3px; }
.places li { height: 19.500px; display: flex; align-items: center; gap: 4px; white-space: nowrap; }
.pi { width: 18px; height: 18px; flex: none; }
.files { flex: 1; background: #fff; border: 1px solid #d5d2cd; }
.fhead, .frow { display: grid; grid-template-columns: 202px 45px 48px 84px; align-items: center; white-space: nowrap; overflow: hidden; width: 379px; }
.fhead { height: 15px; background: #f4f3f1; border-bottom: 1px solid #d5d2cd; }
.fhead span { padding-left: 3px; border-right: 1px solid #dcd9d4; height: 14px; line-height: 14px; overflow: hidden; }
.fhead .fname { padding-left: 15px; display: flex; align-items: center; justify-content: space-between; padding-right: 3px; }
.fhead .fdate { border-right: 0; }
.frow { height: 14px; background: #2f8cc6; color: #eaf4fb; }
.frow .fname { display: flex; align-items: center; gap: 4px; padding-left: 3px; }
.frow span { padding-left: 3px; }
.frow .fsz { text-align: right; padding-right: 3px; }
.fi { width: 11px; height: 12px; flex: none; }
.formgrid { flex: none; display: grid; grid-template-columns: 86px 308px 66px; row-gap: 5px; align-items: center; margin-top: 6px; }
.formgrid .btn { justify-self: end; width: 60px; }
.formgrid .input, .formgrid .combo { height: 18px; }
.tx { line-height: 16px; padding-left: 2px; }
.def { background: linear-gradient(#e7eef5, #d3e0ec); border-color: #7ba3c4; }

.marks { position: absolute; left: 0; top: 0; pointer-events: none; }
.pink { fill: #f5125f; }
.box { fill: none; stroke: #f5125f; stroke-width: 3; }
```
